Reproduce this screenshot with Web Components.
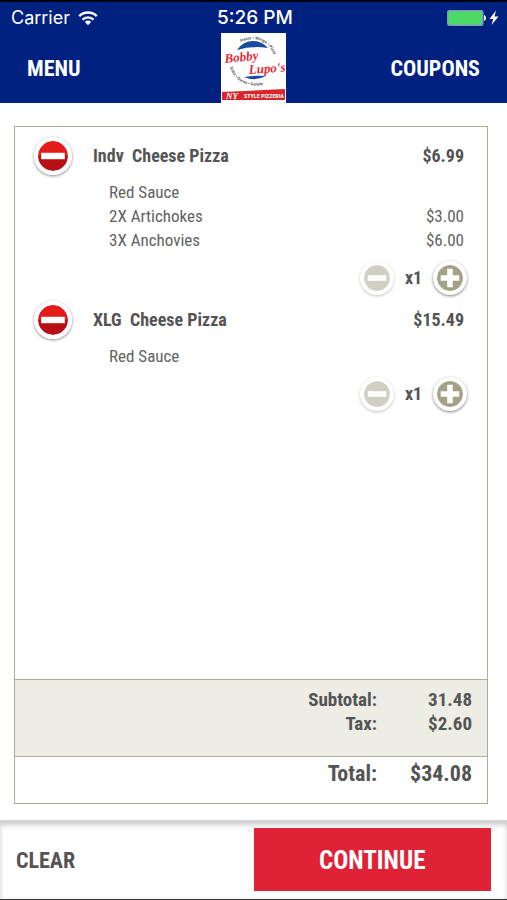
<!DOCTYPE html>
<html lang="en">
<head>
<meta charset="utf-8">
<meta name="viewport" content="width=device-width, initial-scale=1">
<title>Your Order</title>
<style>
  body {
    margin: 0;
    background: #ffffff;
    color: #545454;
    font-family: 'Roboto Condensed', 'Liberation Sans Narrow', Roboto, sans-serif;
  }
</style>
</head>
<body>
<po-app>
  <po-status slot="header" carrier="Carrier" time="5:26 PM"></po-status>
  <po-nav slot="header">
    <a slot="left" href="#menu">MENU</a>
    <po-logo></po-logo>
    <a slot="right" href="#coupons">COUPONS</a>
  </po-nav>
  <po-order>
    <po-item name="Indv  Cheese Pizza" price="$6.99" quantity="1">
      <po-topping name="Red Sauce"></po-topping>
      <po-topping name="2X Artichokes" price="$3.00"></po-topping>
      <po-topping name="3X Anchovies" price="$6.00"></po-topping>
    </po-item>
    <po-item name="XLG  Cheese Pizza" price="$15.49" quantity="1">
      <po-topping name="Red Sauce"></po-topping>
    </po-item>
    <po-totals slot="totals" subtotal="31.48" tax="$2.60" total="$34.08"></po-totals>
  </po-order>
  <po-actions slot="footer"></po-actions>
</po-app>

<script>
// Shared set up, attaches the template and fills in attributes
class POElement extends HTMLElement {
  constructor() {
    super();

    const template = document.createElement( 'template' );
    template.innerHTML = this.constructor.template;
    this.attachShadow( {mode: 'open'} );
    this.shadowRoot.appendChild( template.content.cloneNode( true ) );
  }

  // Parts marked with data-text show the attribute of that name
  _render() {
    this.shadowRoot.querySelectorAll( '[data-text]' ).forEach( ( part ) => {
      part.textContent = this.getAttribute( part.dataset.text ) || '';
    } );
  }

  connectedCallback() {
    this._render();
  }
}

class POApp extends POElement {
  static template = /* template */ `
    <style>
      :host {
        box-sizing: border-box;
        display: flex;
        flex-direction: column;
        min-height: 100vh;
        border-bottom: solid 1px #333333;
      }

      header {
        background-color: #002180;
        border-top: solid 2px #00020f;
      }

      main {
        display: flex;
        flex: 1;
        flex-direction: column;
        padding: 23px 19px 16px 14px;
      }
    </style>
    <header><slot name="header"></slot></header>
    <main><slot></slot></main>
    <slot name="footer"></slot>
  `;
}

class POStatus extends POElement {
  static template = /* template */ `
    <style>
      :host {
        align-items: center;
        box-sizing: border-box;
        color: #ffffff;
        display: grid;
        font-family: Inter, 'Liberation Sans', sans-serif;
        font-size: 18px;
        grid-template-columns: 1fr auto 1fr;
        height: 31px;
        line-height: 24px;
        padding: 1px 8px 0 11px;
      }

      div {
        align-items: center;
        display: flex;
        gap: 8px;
      }

      div:last-child {
        gap: 2px;
        justify-content: flex-end;
      }

      b {
        font-size: 19px;
        font-weight: 500;
      }

      svg {
        display: block;
      }
    </style>
    <div>
      <span data-text="carrier"></span>
      <svg width="20" height="16" viewBox="0 0 20 16" fill="none" stroke="#ffffff" stroke-width="2.4">
        <path d="M1.2 6.2 A12.4 12.4 0 0 1 18.8 6.2"/>
        <path d="M4.5 9.6 A7.8 7.8 0 0 1 15.5 9.6"/>
        <path d="M10 15.2 L6.8 11.9 A4.6 4.6 0 0 1 13.2 11.9 Z" fill="#ffffff" stroke="none"/>
      </svg>
    </div>
    <b data-text="time"></b>
    <div>
      <svg width="40" height="16" viewBox="0 0 40 16">
        <rect x="0.75" y="0.75" width="35" height="14.5" rx="1.5" fill="#4cd964" stroke="#8398bd" stroke-width="1.5"/>
        <path d="M37 5 Q39 5.5 39 8 Q39 10.5 37 11 Z" fill="#ffffff"/>
      </svg>
      <svg width="10" height="16" viewBox="0 0 10 16">
        <path d="M7 0.5 L0.5 9 H4.2 L2.5 15 L9.5 6.5 H5.5 Z" fill="#ffffff"/>
      </svg>
    </div>
  `;
}

class PONav extends POElement {
  static template = /* template */ `
    <style>
      :host {
        align-items: center;
        display: grid;
        grid-template-columns: 1fr auto 1fr;
        padding: 0 27px;
      }

      ::slotted( a ) {
        color: #ffffff;
        font-size: 22px;
        font-weight: 700;
        line-height: 28px;
        padding-top: 2px;
        text-decoration: none;
      }

      ::slotted( a[slot=right] ) {
        justify-self: end;
      }
    </style>
    <slot name="left"></slot>
    <slot></slot>
    <slot name="right"></slot>
  `;
}

class POLogo extends POElement {
  static template = /* template */ `
    <style>
      :host {
        display: block;
      }

      svg {
        display: block;
      }
    </style>
    <svg width="65" height="70" viewBox="0 0 65 70" role="img" aria-label="Bobby Lupo's">
      <defs>
        <path id="upper" d="M20 9 C34 2 52 8 55 30"/>
        <path id="lower" d="M9 34 C13 49 30 58 52 49"/>
      </defs>
      <rect width="65" height="70" fill="#ffffff"/>
      <path d="M16 17 Q22 8 32 8 Q41 8 47 15 Q31 12 16 17 Z" fill="#174b9b"/>
      <path d="M23 44 Q34 42 45 43 Q34 49 23 44 Z" fill="#174b9b"/>
      <g font-family="Liberation Sans, sans-serif" font-size="4" font-weight="700" fill="#4a4a4a">
        <text><textPath href="#upper">Pasta • Wings • Pizza</textPath></text>
        <text><textPath href="#lower">Subs • Gyros • Salads</textPath></text>
      </g>
      <g font-family="Liberation Serif, serif" font-size="13" font-style="italic" font-weight="700" fill="#e02c37">
        <text x="4" y="30" transform="rotate(-6 4 30)">Bobby</text>
        <text x="28" y="41" transform="rotate(-4 28 41)">Lupo's</text>
      </g>
      <path d="M1 59 L64 56 V67 H1 Z" fill="#d9252c"/>
      <text x="5" y="66" font-family="Liberation Serif, serif" font-size="9" font-style="italic" font-weight="700" fill="#ffffff">NY</text>
      <text x="23" y="65" font-family="Roboto Condensed, sans-serif" font-size="6" font-weight="700" fill="#ffffff">STYLE PIZZERIA</text>
    </svg>
  `;
}

class POOrder extends POElement {
  static template = /* template */ `
    <style>
      :host {
        border: solid 1px #adad91;
        display: flex;
        flex: 1;
        flex-direction: column;
      }

      section {
        flex: 1;
        padding-top: 9px;
      }
    </style>
    <section aria-label="Items"><slot></slot></section>
    <slot name="totals"></slot>
  `;
}

class POItem extends POElement {
  static template = /* template */ `
    <style>
      :host {
        display: block;
        font-size: 18px;
        line-height: 24px;
        margin-bottom: 4px;
      }

      div {
        align-items: center;
        display: flex;
        font-weight: 700;
        padding: 0 23px 0 18px;
      }

      h2 {
        flex: 1;
        font-size: 18px;
        margin: 0 0 0 20px;
        white-space: pre;
      }

      ul {
        list-style: none;
        margin: 4px 0 8px 0;
        padding: 0 23px 0 94px;
      }

      div.quantity {
        justify-content: flex-end;
        padding-right: 19px;
      }

      div.quantity span {
        text-align: center;
        width: 37px;
      }
    </style>
    <div>
      <po-round-button kind="remove" label="Remove item"></po-round-button>
      <h2 data-text="name"></h2>
      <span data-text="price"></span>
    </div>
    <ul><slot></slot></ul>
    <div class="quantity">
      <po-round-button kind="less" label="Decrease quantity"></po-round-button>
      <span>x1</span>
      <po-round-button kind="more" label="Increase quantity"></po-round-button>
    </div>
  `;

  _render() {
    super._render();
    this.shadowRoot.querySelector( '.quantity span' ).textContent = `x${this.getAttribute( 'quantity' )}`;
  }
}

class POTopping extends POElement {
  static template = /* template */ `
    <style>
      :host {
        color: #626262;
        display: flex;
        font-size: 17px;
        justify-content: space-between;
        line-height: 24px;
      }
    </style>
    <span data-text="name"></span>
    <span data-text="price"></span>
  `;

  connectedCallback() {
    this.setAttribute( 'role', 'listitem' );
    super.connectedCallback();
  }
}

// Round icon button
// Kinds are remove, less, more
class PORoundButton extends POElement {
  static template = /* template */ `
    <style>
      :host {
        --size: 36px;
        --face: #a3a286;
        display: block;
      }

      :host( [kind=remove] ) {
        --size: 40px;
        --face: linear-gradient( #e51b1b 50%, #b80f14 50% );
      }

      :host( [kind=less] ) {
        --face: #d0d0c2;
      }

      button {
        background: none;
        border: none;
        cursor: pointer;
        display: block;
        height: var( --size );
        padding: 1px;
        width: var( --size );
      }

      span {
        background: var( --face );
        border: solid 4px #ffffff;
        border-radius: 50%;
        box-shadow: 0 1px 3px #00000080;
        box-sizing: border-box;
        background-clip: padding-box;
        display: block;
        height: 100%;
      }

      :host( [kind=less] ) span {
        box-shadow: 0 1px 3px #00000040;
      }

      svg {
        display: block;
        height: 100%;
        width: 100%;
      }
    </style>
    <button type="button"><span><svg viewBox="0 0 28 28"><path fill="#ffffff"/></svg></span></button>
  `;

  _render() {
    const shapes = {
      remove: 'M3 11 H25 V17 H3 Z',
      less: 'M4 11 H24 V17 H4 Z',
      more: 'M11 4 H17 V11 H24 V17 H17 V24 H11 V17 H4 V11 H11 Z'
    };

    this.shadowRoot.querySelector( 'path' ).setAttribute( 'd', shapes[this.getAttribute( 'kind' )] );
    this.shadowRoot.querySelector( 'button' ).setAttribute( 'aria-label', this.getAttribute( 'label' ) );
  }
}

class POTotals extends POElement {
  static template = /* template */ `
    <style>
      :host {
        display: block;
        font-size: 19px;
        font-weight: 700;
        line-height: 24px;
      }

      dl {
        border-top: solid 1px #adad91;
        display: grid;
        grid-template-columns: 1fr 95px;
        margin: 0;
        padding: 8px 15px 20px 15px;
        text-align: right;
      }

      dl:first-of-type {
        background-color: #edede5;
      }

      dl:last-of-type {
        font-size: 22px;
        padding: 5px 15px 17px 15px;
      }

      dd {
        margin: 0;
      }
    </style>
    <dl>
      <dt>Subtotal:</dt><dd data-text="subtotal"></dd>
      <dt>Tax:</dt><dd data-text="tax"></dd>
    </dl>
    <dl>
      <dt>Total:</dt><dd data-text="total"></dd>
    </dl>
  `;
}

class POActions extends POElement {
  static template = /* template */ `
    <style>
      :host {
        border-top: solid 3px #d3d3d3;
        box-shadow: inset 0 2px 5px #00000033;
        display: grid;
        grid-template-columns: 1fr 1fr;
        padding: 5px 16px 8px 16px;
      }

      button {
        background: none;
        border: none;
        color: inherit;
        cursor: pointer;
        font: inherit;
        font-size: 22px;
        font-weight: 700;
        height: 63px;
        line-height: 28px;
        padding: 3px 0 0 0;
        text-align: left;
      }

      button.primary {
        background-color: #df2235;
        color: #ffffff;
        font-size: 25px;
        text-align: center;
      }
    </style>
    <button type="button">CLEAR</button>
    <button type="button" class="primary">CONTINUE</button>
  `;
}

window.customElements.define( 'po-app', POApp );
window.customElements.define( 'po-status', POStatus );
window.customElements.define( 'po-nav', PONav );
window.customElements.define( 'po-logo', POLogo );
window.customElements.define( 'po-order', POOrder );
window.customElements.define( 'po-round-button', PORoundButton );
window.customElements.define( 'po-item', POItem );
window.customElements.define( 'po-topping', POTopping );
window.customElements.define( 'po-totals', POTotals );
window.customElements.define( 'po-actions', POActions );
</script>
</body>
</html>
